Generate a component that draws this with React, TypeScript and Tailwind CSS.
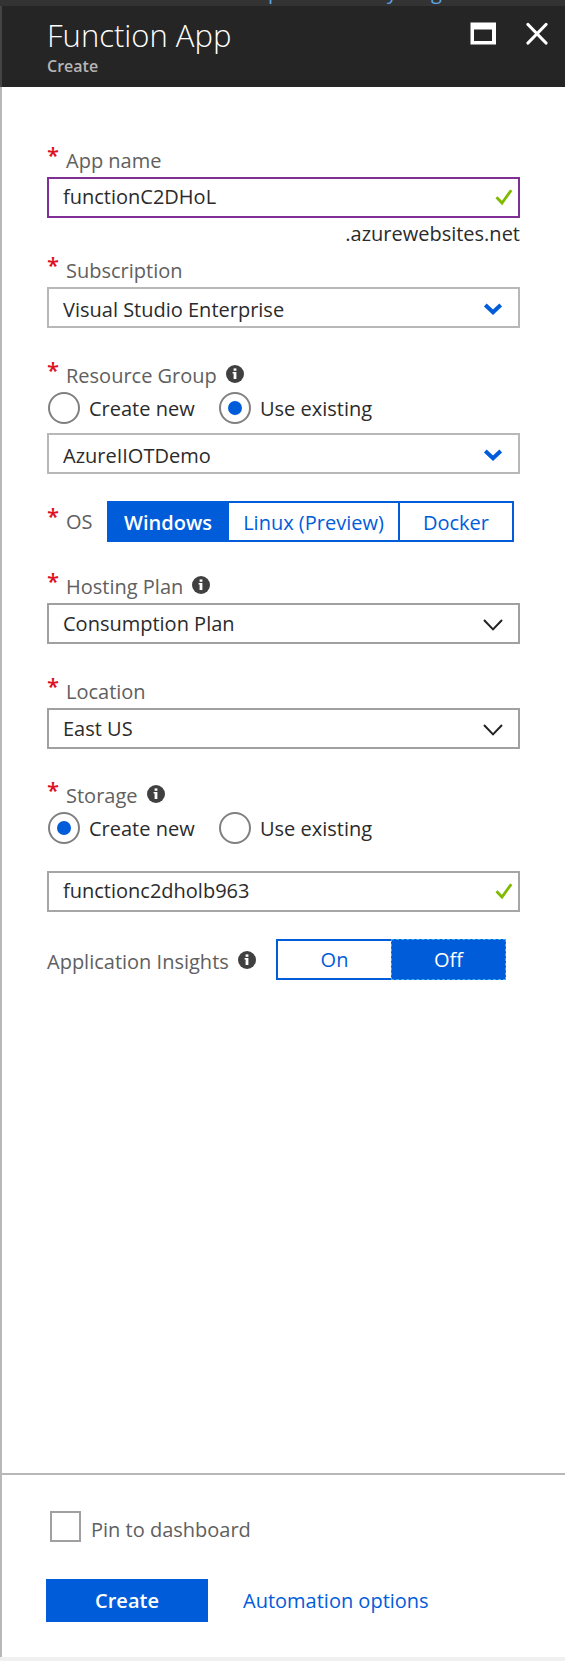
import { useState, type ReactNode } from "react";

function InfoIcon() {
  return (
    <svg viewBox="0 0 18 18" className="size-[18px] shrink-0" role="img" aria-label="More information">
      <circle cx="9" cy="9" r="9" fill="#404040" />
      <rect x="7.6" y="3.4" width="2.8" height="2.4" fill="#fff" />
      <path d="M6.6 7h3.8v7H7.6V8.4h-1z" fill="#fff" />
    </svg>
  );
}

function CheckIcon() {
  return (
    <svg viewBox="0 0 18 16" className="pointer-events-none absolute top-[11px] right-[7px] h-[18px] w-[18px]" aria-hidden="true">
      <path d="M1.5 8.2 L7 14 L16.3 1.2" fill="none" stroke="#7fba00" strokeWidth="2.8" />
    </svg>
  );
}

function Chevron({ bold }: { bold: boolean }) {
  return bold ? (
    <svg viewBox="0 0 20 12" className="pointer-events-none absolute top-4 right-[17px] h-[12px] w-[20px]" aria-hidden="true">
      <path d="M2.3 2 L10 9.2 L17.7 2" fill="none" stroke="#015cda" strokeWidth="4" />
    </svg>
  ) : (
    <svg viewBox="0 0 20 12" className="pointer-events-none absolute top-4 right-[17px] h-[12px] w-[20px]" aria-hidden="true">
      <path d="M1 1 L10 10.4 L19 1" fill="none" stroke="#222" strokeWidth="2" />
    </svg>
  );
}

function Star() {
  return (
    <span className="w-[19px] shrink-0 text-[22px] leading-[18px] font-semibold text-[#dd1122]" aria-hidden="true">
      *
    </span>
  );
}

function FieldLabel({ htmlFor, info, children }: { htmlFor?: string; info?: boolean; children: ReactNode }) {
  return (
    <div className="flex leading-[32px] text-[#606060]">
      <Star />
      {htmlFor ? <label htmlFor={htmlFor}>{children}</label> : <span>{children}</span>}
      {info && (
        <span className="ml-[9px] flex h-7 items-center">
          <InfoIcon />
        </span>
      )}
    </div>
  );
}

function TextField({ id, label, initial, focused }: { id: string; label?: string; initial: string; focused?: boolean }) {
  const [value, setValue] = useState(initial);
  return (
    <div className="relative">
      <input
        id={id}
        type="text"
        aria-label={label}
        value={value}
        onChange={(e) => setValue(e.target.value)}
        className={
          "block h-[41px] w-full border-2 bg-white pr-8 pb-[3px] pl-[14px] text-[#2b2b2b] outline-none " +
          (focused ? "border-[#7f2f96]" : "border-[#a6a6a6]")
        }
      />
      <CheckIcon />
    </div>
  );
}

function SelectField({ id, label, option, bold = false }: { id: string; label?: string; option: string; bold?: boolean }) {
  return (
    <div className="relative">
      <select
        id={id}
        aria-label={label}
        className={
          "block h-[41px] w-full appearance-none border-2 bg-white pr-10 pl-[14px] text-[#2b2b2b] outline-none " +
          (bold ? "border-[#b8b8b8] pt-[5px]" : "border-[#a0a0a0] pt-px")
        }
      >
        <option>{option}</option>
      </select>
      <Chevron bold={bold} />
    </div>
  );
}

function RadioPair({ name, initial }: { name: string; initial: string }) {
  const [value, setValue] = useState(initial);
  return (
    <div className="flex pl-px">
      {["Create new", "Use existing"].map((option) => (
        <label key={option} className="flex h-8 w-[171px] items-center gap-[9px] whitespace-nowrap text-[#2b2b2b]">
          <input
            type="radio"
            name={name}
            checked={value === option}
            onChange={() => setValue(option)}
            className="grid size-8 shrink-0 appearance-none place-content-center rounded-full border-2 border-[#808080] bg-white before:size-[14px] before:rounded-full checked:before:bg-[#015cda]"
          />
          <span className="pt-[2px]">{option}</span>
        </label>
      ))}
    </div>
  );
}

export default function App() {
  const [os, setOs] = useState("Windows");
  const [insights, setInsights] = useState("Off");
  return (
    <div className="flex min-h-screen flex-col bg-[#f0f0f0] font-['Open_Sans','Noto_Sans',sans-serif] text-[20px]">
      <div className="h-[6px] overflow-hidden bg-[#333]" aria-hidden="true">
        <div className="-mt-6 flex pl-[268px] text-[20px] leading-[32px] text-[#5ea3e0]">
          <span className="w-[119px]">p</span>
          <span className="w-[44px]">y</span>
          <span>g</span>
        </div>
      </div>
      <header className="flex h-[81px] shrink-0 justify-between border-l-2 border-[#444] bg-[#252525] pr-4 pl-[45px]">
        <div>
          <h1 className="pt-[9px] text-[31px] leading-[40px] font-light text-white">Function App</h1>
          <p className="text-[16px] leading-[22px] font-semibold text-[#b5b5b5]">Create</p>
        </div>
        <div className="flex items-start gap-[28px] pt-[15px]">
          <button type="button" aria-label="Maximize" className="block">
            <svg viewBox="0 0 28 24" className="h-[24px] w-[28px]">
              <path d="M1.5 1.500h25.500v22h-25.500z M5 8.500v11.500h18V8.500z" fill="#fff" fillRule="evenodd" />
            </svg>
          </button>
          <button type="button" aria-label="Close" className="block">
            <svg viewBox="0 0 24 24" className="h-[24px] w-[24px]">
              <path d="M3 3.500 L21 22 M21 3.500 L3 22" stroke="#fff" strokeWidth="3.2" strokeLinecap="round" />
            </svg>
          </button>
        </div>
      </header>

      <div className="flex grow flex-col border-l-2 border-[#b8b8b8] bg-white">
        <form className="flex grow flex-col pt-[58px] pr-[45px] pl-[45px]">
          <FieldLabel htmlFor="app-name">App name</FieldLabel>
          <TextField id="app-name" initial="functionC2DHoL" focused />
          <p className="mt-[2px] text-right leading-[28px] text-[#2b2b2b]">.azurewebsites.net</p>

          <div className="mt-[7px]">
            <FieldLabel htmlFor="subscription">Subscription</FieldLabel>
            <SelectField id="subscription" option="Visual Studio Enterprise" bold />
          </div>

          <div className="mt-8">
            <FieldLabel info>Resource Group</FieldLabel>
            <RadioPair name="group" initial="Use existing" />
            <div className="mt-[9px]">
              <SelectField id="group-name" label="Resource Group" option="AzureIIOTDemo" bold />
            </div>
          </div>

          <div className="mt-[27px] flex h-[41px]">
            <div className="pt-[5px]">
              <FieldLabel>
                <span className="block w-[41px]">OS</span>
              </FieldLabel>
            </div>
            <div className="flex" role="group" aria-label="OS">
              {[
                { name: "Windows", width: "w-[122px]" },
                { name: "Linux (Preview)", width: "w-[173px]" },
                { name: "Docker", width: "w-[116px]" },
              ].map((item) => (
                <button
                  key={item.name}
                  type="button"
                  aria-pressed={os === item.name}
                  onClick={() => setOs(item.name)}
                  className={
                    "-mr-[2px] border-2 border-[#015cda] pt-[2px] whitespace-nowrap " +
                    item.width +
                    (os === item.name ? " bg-[#015cda] font-semibold text-white" : " bg-white text-[#015cda]")
                  }
                >
                  {item.name}
                </button>
              ))}
            </div>
          </div>

          <div className="mt-[29px]">
            <FieldLabel htmlFor="plan" info>Hosting Plan</FieldLabel>
            <SelectField id="plan" option="Consumption Plan" />
          </div>

          <div className="mt-8">
            <FieldLabel htmlFor="location">Location</FieldLabel>
            <SelectField id="location" option="East US" />
          </div>

          <div className="mt-[31px]">
            <FieldLabel info>Storage</FieldLabel>
            <RadioPair name="storage" initial="Create new" />
            <div className="mt-[27px]">
              <TextField id="storage-name" label="Storage" initial="functionc2dholb963" />
            </div>
          </div>

          <div className="mt-[27px] flex h-[41px]">
            <div className="flex w-[229px] shrink-0 items-center gap-[9px] text-[#606060]">
              <span className="pt-1 whitespace-nowrap">Application Insights</span>
              <InfoIcon />
            </div>
            <div className="flex" role="group" aria-label="Application Insights">
              {["On", "Off"].map((item) => (
                <button
                  key={item}
                  type="button"
                  aria-pressed={insights === item}
                  onClick={() => setInsights(item)}
                  className={
                    "w-[115px] " +
                    (insights === item
                      ? "border border-dashed border-[#35b0f5] bg-[#015cda] text-white"
                      : "border-2 border-r-0 border-[#015cda] bg-white text-[#015cda]")
                  }
                >
                  {item}
                </button>
              ))}
            </div>
          </div>
        </form>

        <footer className="border-t-2 border-[#b8b8b8] pt-9 pr-[45px] pb-[35px] pl-[44px]">
          <label className="flex w-fit items-center gap-[10px] pl-1 text-[#606060]">
            <input
              type="checkbox"
              className="size-[31px] shrink-0 appearance-none border-2 border-[#a0a0a0] bg-white checked:bg-[#015cda]"
            />
            <span className="pt-[7px] leading-[24px]">Pin to dashboard</span>
          </label>
          <div className="mt-[37px] flex items-center">
            <button type="button" className="h-[43px] w-[162px] bg-[#015cda] pt-px font-semibold text-white">
              Create
            </button>
            <a href="#automation" className="ml-[35px] text-[#015cda]">
              Automation options
            </a>
          </div>
        </footer>
      </div>
      <div className="h-1 shrink-0" />
    </div>
  );
}
